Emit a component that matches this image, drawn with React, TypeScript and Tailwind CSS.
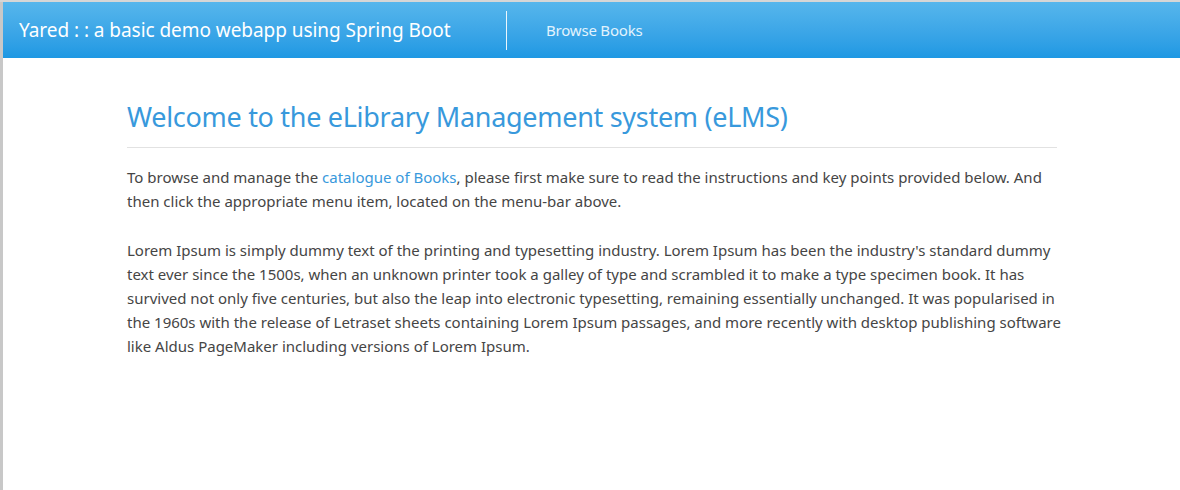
export default function App() {
  const font = { fontFamily: '"Noto Sans", "Open Sans", sans-serif' };
  return (
    <div className="w-[1180px] h-[490px] bg-white flex flex-col overflow-hidden" style={font}>
      <div className="h-[2px] bg-[#d6d6d6] shrink-0" />
      <div className="flex flex-1">
        <div className="w-[3px] bg-[#c8c8c8] shrink-0" />
        <div className="flex-1">
          <nav className="h-[56px] flex items-center bg-gradient-to-b from-[#56b6ec] to-[#1d98e3]">
            <div className="pl-[16px] w-[503px] text-white text-[19px] tracking-[-0.05px] whitespace-nowrap">
              Yared : : a basic demo webapp using Spring Boot
            </div>
            <div className="w-px h-[39px] bg-white/90" />
            <div className="pl-[39px] text-[15px] text-[#e2f3fd] whitespace-nowrap tracking-[-0.2px]">Browse Books</div>
          </nav>
          <main className="ml-[124px] w-[930px] text-[#454545] text-[15px] leading-[24px]">
            <h1 className="mt-[39px] text-[27px] leading-[40px] text-[#3899dc] tracking-[-0.3px] whitespace-nowrap">
              Welcome to the eLibrary Management system (eLMS)
            </h1>
            <div className="mt-[10px] h-px bg-[#e2e2e2]" />
            <div className="mt-[17px] whitespace-nowrap">
              <p>
                To browse and manage the <span className="text-[#3899dc]">catalogue of Books</span>, please first make sure to read the instructions and key points provided below. And
                <br />
                then click the appropriate menu item, located on the menu-bar above.
              </p>
              <p className="mt-[25px]">
                Lorem Ipsum is simply dummy text of the printing and typesetting industry. Lorem Ipsum has been the industry's standard dummy
                <br />
                text ever since the 1500s, when an unknown printer took a galley of type and scrambled it to make a type specimen book. It has
                <br />
                survived not only five centuries, but also the leap into electronic typesetting, remaining essentially unchanged. It was popularised in
                <br />
                the 1960s with the release of Letraset sheets containing Lorem Ipsum passages, and more recently with desktop publishing software
                <br />
                like Aldus PageMaker including versions of Lorem Ipsum.
              </p>
            </div>
          </main>
        </div>
      </div>
    </div>
  );
}
